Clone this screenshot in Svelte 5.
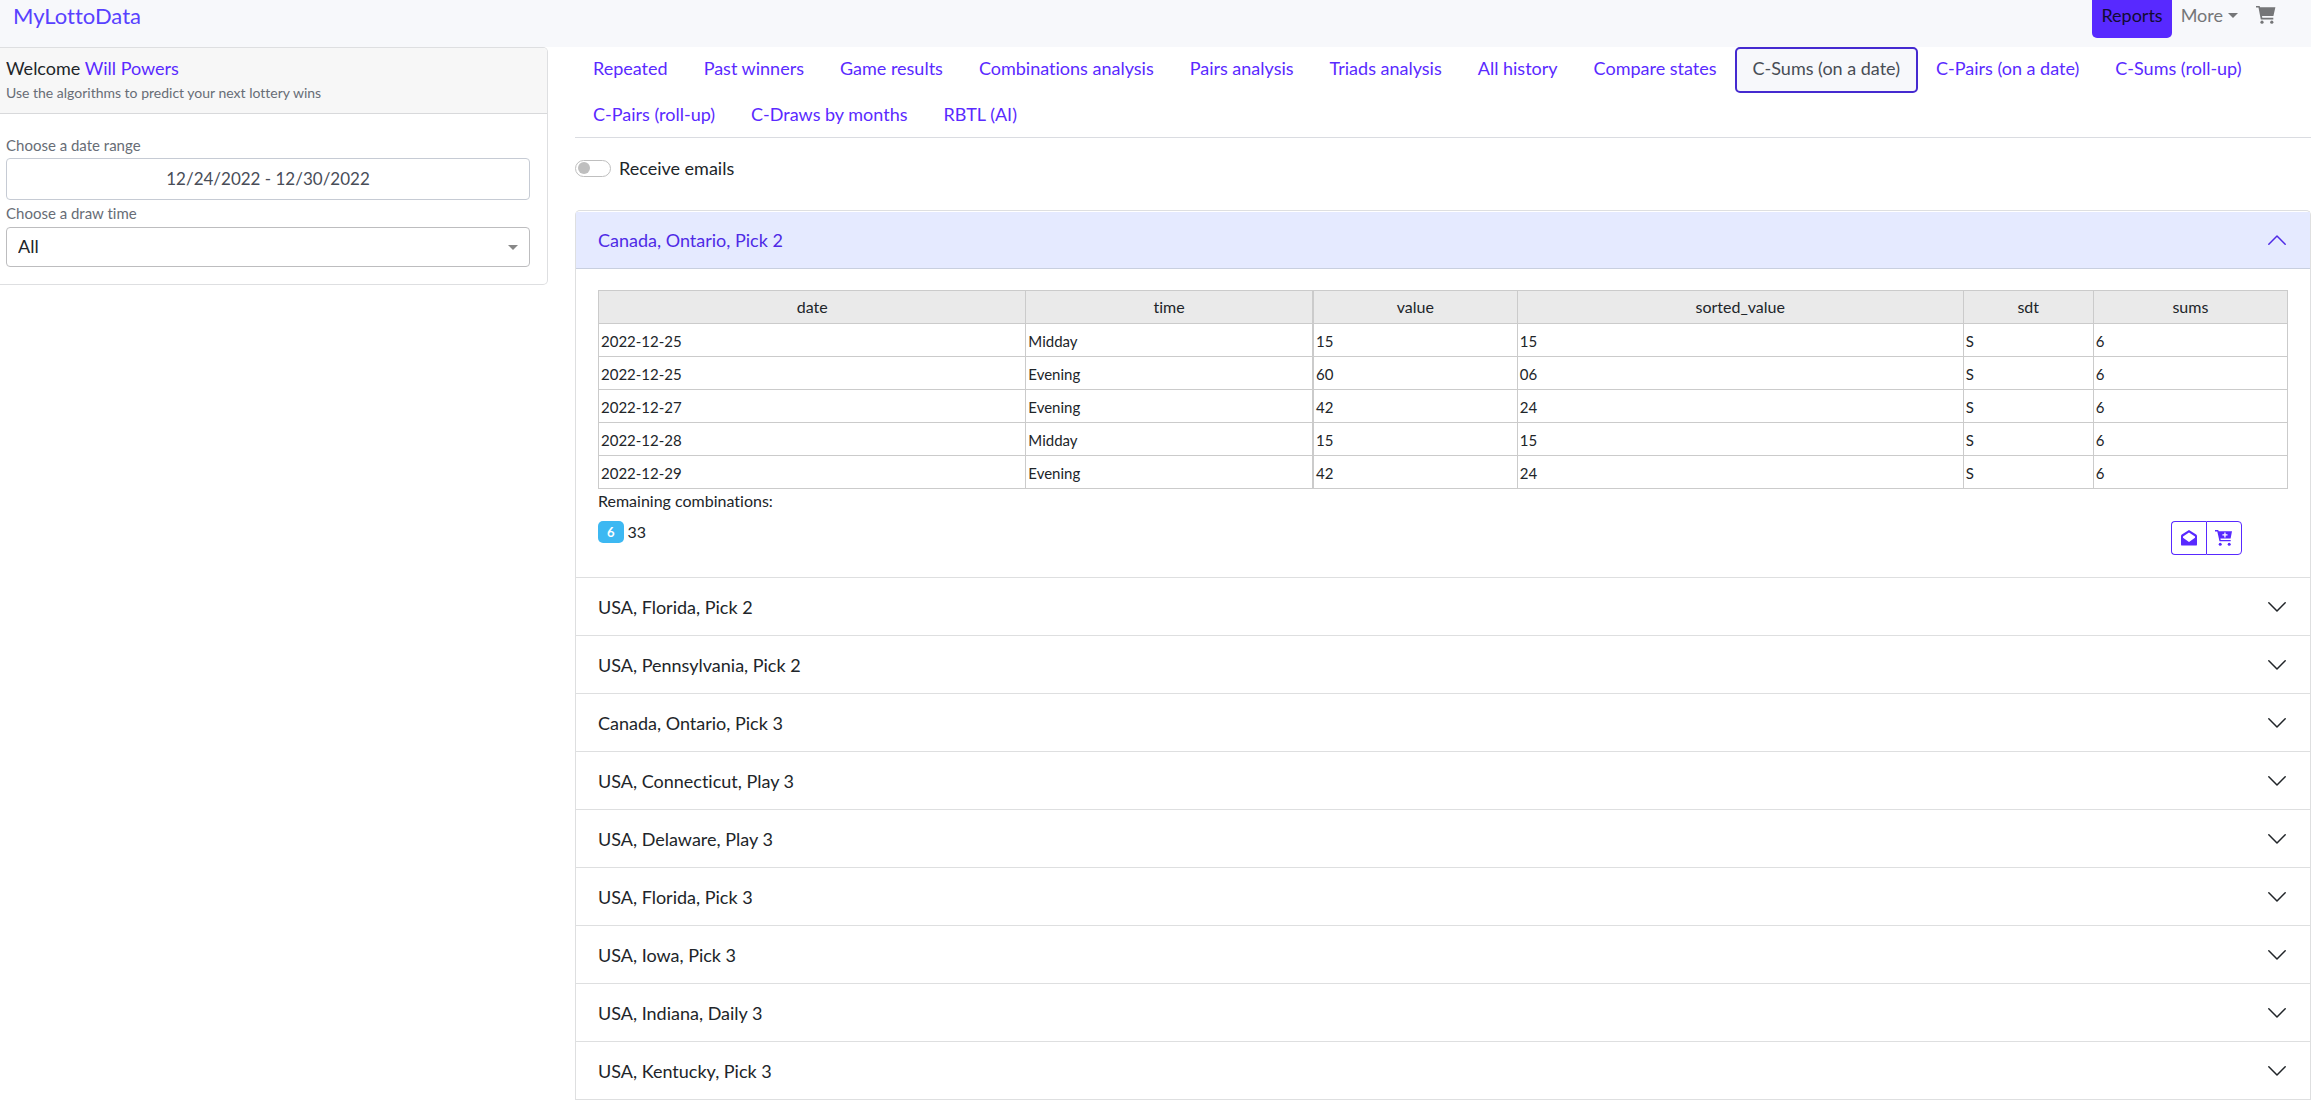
<script>
  let rangeText = $state('12/24/2022 - 12/30/2022');
  let drawTime = $state('All');
  let receiveEmails = $state(false);
  let activeTab = $state('C-Sums (on a date)');
  let openGame = $state('Canada, Ontario, Pick 2');

  const tabs = [
    'Repeated', 'Past winners', 'Game results', 'Combinations analysis', 'Pairs analysis',
    'Triads analysis', 'All history', 'Compare states', 'C-Sums (on a date)',
    'C-Pairs (on a date)', 'C-Sums (roll-up)', 'C-Pairs (roll-up)', 'C-Draws by months', 'RBTL (AI)'
  ];

  const games = [
    'Canada, Ontario, Pick 2', 'USA, Florida, Pick 2', 'USA, Pennsylvania, Pick 2',
    'Canada, Ontario, Pick 3', 'USA, Connecticut, Play 3', 'USA, Delaware, Play 3',
    'USA, Florida, Pick 3', 'USA, Iowa, Pick 3', 'USA, Indiana, Daily 3', 'USA, Kentucky, Pick 3'
  ];

  const columns = ['date', 'time', 'value', 'sorted_value', 'sdt', 'sums'];
  const rows = [
    ['2022-12-25', 'Midday', '15', '15', 'S', '6'],
    ['2022-12-25', 'Evening', '60', '06', 'S', '6'],
    ['2022-12-27', 'Evening', '42', '24', 'S', '6'],
    ['2022-12-28', 'Midday', '15', '15', 'S', '6'],
    ['2022-12-29', 'Evening', '42', '24', 'S', '6']
  ];
</script>

<div class="page">
  <header class="navbar">
    <a class="brand" href="#home">MyLottoData</a>
    <nav class="links" aria-label="Main">
      <a class="link current" href="#reports">Reports</a>
      <button class="link more" type="button">More<span class="caret"></span></button>
      <a class="link cart" href="#cart" aria-label="Cart">
        <svg viewBox="0 0 20 18" width="20" height="18" aria-hidden="true">
          <path d="M0 0h3.6l.5 1.2H19.4L17.4 10H6l.3 1.8h11v1.6H4.8L2.5 1.6H0z" />
          <circle cx="6" cy="16.2" r="1.6" />
          <circle cx="15.8" cy="16.2" r="1.6" />
        </svg>
      </a>
    </nav>
  </header>

  <div class="columns">
    <aside class="card">
      <div class="card-head">
        <div class="welcome">Welcome <a href="#profile">Will Powers</a></div>
        <div class="hint">Use the algorithms to predict your next lottery wins</div>
      </div>
      <div class="card-body">
        <label for="range">Choose a date range</label>
        <input id="range" class="range" type="text" bind:value={rangeText} />
        <label for="draw">Choose a draw time</label>
        <div class="select-wrap">
          <select id="draw" bind:value={drawTime}>
            <option>All</option>
            <option>Midday</option>
            <option>Evening</option>
          </select>
          <span class="caret"></span>
        </div>
      </div>
    </aside>

    <main>
      <div class="tabs" role="tablist">
        {#each tabs as tab}
          <button
            type="button"
            role="tab"
            class="tab"
            class:active={tab === activeTab}
            aria-selected={tab === activeTab}
            onclick={() => (activeTab = tab)}>{tab}</button>
        {/each}
      </div>

      <label class="switch">
        <input type="checkbox" role="switch" bind:checked={receiveEmails} />
        <span>Receive emails</span>
      </label>

      <div class="accordion">
        {#each games as game}
          <section class="item">
            <button
              type="button"
              class="toggle"
              class:open={game === openGame}
              aria-expanded={game === openGame}
              onclick={() => (openGame = game === openGame ? '' : game)}>
              <span>{game}</span>
              <svg viewBox="0 0 20 20" width="20" height="20" aria-hidden="true">
                <path d="M1.8 5.8 10 14l8.2-8.2" />
              </svg>
            </button>
            {#if game === openGame}
              <div class="panel">
                <table>
                  <thead>
                    <tr>{#each columns as column}<th scope="col" class={column}>{column}</th>{/each}</tr>
                  </thead>
                  <tbody>
                    {#each rows as row}
                      <tr>{#each row as cell, i}<td class={columns[i]}>{cell}</td>{/each}</tr>
                    {/each}
                  </tbody>
                </table>
                <div class="remaining">Remaining combinations:</div>
                <div class="summary">
                  <div class="combos"><span class="badge">6</span><span>33</span></div>
                  <div class="actions">
                    <button type="button" aria-label="Email this report">
                      <svg viewBox="0 0 16 16" width="16" height="16" aria-hidden="true">
                        <path fill-rule="evenodd" d="M8 0 15.2 4.6q.8.6.8 1.6v8.2q0 1.2-1.2 1.2H1.2Q0 15.6 0 14.4V6.2q0-1 .8-1.6zM8 2.6 2 6.4v1.4l6 4.2 6-4.2V6.4z" />
                      </svg>
                    </button>
                    <button type="button" aria-label="Add to cart">
                      <svg viewBox="0 0 18 16" width="18" height="16" aria-hidden="true">
                        <path fill-rule="evenodd" d="M0 0h3.2l.5 1.2H17L15.6 8.6H5.4l.3 1.3h10v1.3H4.5L2.3 1.4H0zM9.3 2.4v1.9H7.4v1.2h1.9v1.9h1.3V5.5h1.9V4.3h-1.9V2.4z" />
                        <circle cx="5.2" cy="14.2" r="1.5" />
                        <circle cx="14.2" cy="14.2" r="1.5" />
                      </svg>
                    </button>
                  </div>
                </div>
              </div>
            {/if}
          </section>
        {/each}
      </div>
    </main>
  </div>
</div>

<style>
  :global(body) {
    background: #fff;
    overflow: hidden;
  }
  .page {
    padding-right: 9px;
    font-family: Lato, sans-serif;
    font-size: 18px;
    line-height: 26px;
    font-variant-ligatures: none;
    color: #212529;
  }
  button, input, select {
    font: inherit;
    font-variant-ligatures: none;
    color: inherit;
    margin: 0;
    box-sizing: border-box;
  }
  button {
    background: none;
    border: 0;
    padding: 0;
    cursor: pointer;
  }
  a {
    color: #5a2aff;
    text-decoration: none;
  }
  .navbar {
    display: flex;
    align-items: flex-start;
    justify-content: space-between;
    height: 47px;
    padding: 0 26px 0 13px;
    background: #f7f8fb;
  }
  .brand {
    font-size: 22px;
    line-height: 32px;
    color: #5841ff;
  }
  .links {
    display: flex;
  }
  .link {
    display: flex;
    align-items: center;
    box-sizing: border-box;
    height: 38px;
    padding: 0 9px 8px;
    color: #757678;
  }
  .link.current {
    background: #5829ff;
    color: #120b33;
    border-radius: 0 0 5px 5px;
  }
  .link svg {
    fill: currentColor;
  }
  .caret {
    border: 5px solid transparent;
    border-top-color: currentColor;
    border-bottom: 0;
  }
  .more .caret {
    margin-left: 5px;
  }
  .columns {
    display: grid;
    grid-template-columns: minmax(0, 548px) minmax(0, 1fr);
    column-gap: 27px;
    align-items: start;
  }
  .card {
    border: 1px solid #dedfe1;
    border-left: 0;
    border-radius: 0 5px 5px 0;
    overflow: hidden;
  }
  .card-head {
    padding: 7px 6px 8px;
    background: #f7f7f7;
    border-bottom: 1px solid #d8d9db;
  }
  .hint, .card-body label {
    font-size: 15px;
    line-height: 24px;
    color: #676d76;
  }
  .hint {
    font-size: 14px;
  }
  .card-body {
    display: flex;
    flex-direction: column;
    padding: 19px 17px 17px 6px;
  }
  .card-body label {
    padding: 0 0 1px;
  }
  .range {
    height: 42px;
    width: 100%;
    padding: 0 2px 2px;
    border: 1px solid #c6cbd4;
    border-radius: 4px;
    text-align: center;
    font-size: 17px;
    color: #484d58;
    background: #fff;
  }
  .card-body label[for='draw'] {
    padding: 1px 0 2px;
  }
  .select-wrap {
    display: grid;
    align-items: center;
  }
  .select-wrap > * {
    grid-area: 1 / 1;
  }
  .select-wrap .caret {
    justify-self: end;
    margin-right: 12px;
    color: #888;
    pointer-events: none;
  }
  select {
    appearance: none;
    width: 100%;
    height: 40px;
    padding: 0 11px 2px;
    border: 1px solid #bdbdbf;
    border-radius: 4px;
    background: #fff;
  }
  .tabs {
    display: flex;
    flex-wrap: wrap;
    border-bottom: 1px solid #dadce1;
    height: 90px;
  }
  .tab {
    height: 46px;
    padding: 0 16px 4px;
    border: 2px solid transparent;
    border-radius: 5px;
    color: #5a2aff;
  }
  .tab.active {
    background: #f7f8fb;
    border-color: #452ad0;
    color: #484d55;
  }
  .switch {
    display: flex;
    align-items: center;
    gap: 8px;
    width: max-content;
    margin: 17px 0 29px;
  }
  .switch input {
    appearance: none;
    display: flex;
    align-items: center;
    width: 36px;
    height: 17px;
    padding: 0 2px;
    border: 1px solid #bfbfbf;
    border-radius: 9px;
  }
  .switch input::before {
    content: '';
    width: 12px;
    height: 12px;
    border-radius: 50%;
    background: #bfbfbf;
  }
  .switch input:checked {
    justify-content: flex-end;
  }
  .accordion {
    border: 1px solid #dedfe0;
    border-bottom: 0;
    border-radius: 5px 5px 0 0;
    padding-top: 1px;
  }
  .item {
    border-bottom: 1px solid #dedfe0;
  }
  .toggle {
    display: flex;
    align-items: center;
    justify-content: space-between;
    width: 100%;
    height: 57px;
    padding: 0 23px 0 22px;
    text-align: left;
  }
  .toggle svg {
    fill: none;
    stroke: currentColor;
    stroke-width: 1.5;
    stroke-linecap: round;
    stroke-linejoin: round;
  }
  .toggle.open {
    color: #4f2ae6;
    background: #e5eaff;
    border-bottom: 1px solid #c8cfdf;
  }
  .toggle.open svg {
    transform: rotate(180deg);
  }
  .panel {
    padding: 21px 22px 22px;
    font-size: 16px;
    line-height: 24px;
  }
  table {
    width: 100%;
    border-collapse: collapse;
    table-layout: fixed;
  }
  th, td {
    box-sizing: border-box;
    height: 33px;
    padding: 0 2px;
    border: 1px solid #cbcbcb;
    font-weight: 400;
    text-align: left;
  }
  td {
    padding-top: 2px;
    font-size: 15px;
  }
  th {
    background: #eaeaea;
    text-align: center;
  }
  .date { width: 25.3%; }
  .time { width: 17%; }
  .value { width: 12.1%; border-left-width: 2px; }
  .sorted_value { width: 26.4%; }
  .sdt { width: 7.7%; }
  .summary {
    display: flex;
    justify-content: space-between;
    padding: 8px 46px 0 0;
  }
  .combos {
    display: flex;
    align-items: center;
    gap: 4px;
    height: 22px;
  }
  .badge {
    padding: 0 9px;
    border-radius: 5px;
    background: #3db8f2;
    color: #fff;
    font-size: 13px;
    font-weight: 700;
    line-height: 22px;
  }
  .actions {
    display: flex;
  }
  .actions button {
    display: flex;
    align-items: center;
    justify-content: center;
    width: 36px;
    height: 34px;
    border: 1px solid #5829ff;
    border-radius: 0 4px 4px 0;
  }
  .actions button:first-child {
    width: 35px;
    border-right: 0;
    border-radius: 4px 0 0 4px;
  }
  .actions svg {
    fill: #5829ff;
  }
</style>
